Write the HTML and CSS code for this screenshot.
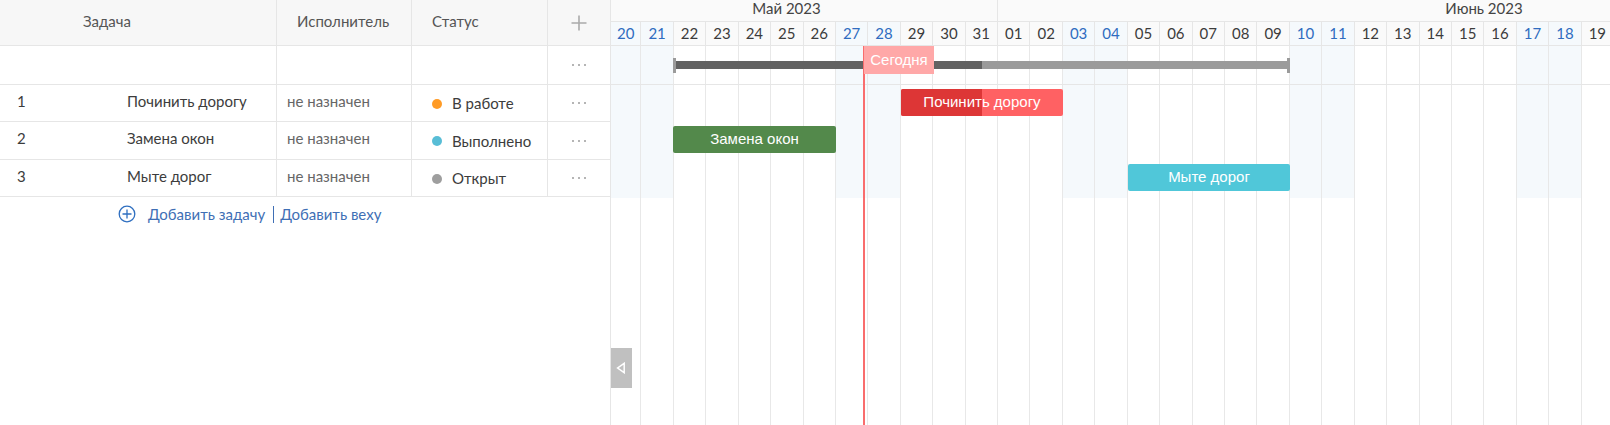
FILE: index.html
```html
<!DOCTYPE html>
<html>
	<head>
		<meta charset="utf-8">
		<title>Диаграмма Ганта</title>
		<link rel="stylesheet" href="styles.css">
	</head>
	<body>
		<div class="gantt">
			<div class="left">
				<div class="tr th">
					<div class="td c-task"><span class="head-task">Задача</span></div>
					<div class="td c-user"><span class="head-user">Исполнитель</span></div>
					<div class="td c-status">Статус</div>
					<div class="td c-act">
						<svg width="18" height="18" viewBox="0 0 18 18"><path d="M9 1.5v15M1.5 9h15" stroke="#aaa" stroke-width="1.6" fill="none"/></svg>
					</div>
				</div>
				<div class="tr project">
					<div class="td c-task"></div>
					<div class="td c-user"></div>
					<div class="td c-status"></div>
					<div class="td c-act"><span class="dots"><i></i><i></i><i></i></span></div>
				</div>
				<div class="tr row1">
					<div class="td c-task"><span class="num">1</span>Починить дорогу</div>
					<div class="td c-user">не назначен</div>
					<div class="td c-status"><span class="dot orange"></span>В работе</div>
					<div class="td c-act"><span class="dots"><i></i><i></i><i></i></span></div>
				</div>
				<div class="tr row2">
					<div class="td c-task"><span class="num">2</span>Замена окон</div>
					<div class="td c-user">не назначен</div>
					<div class="td c-status"><span class="dot blue"></span>Выполнено</div>
					<div class="td c-act"><span class="dots"><i></i><i></i><i></i></span></div>
				</div>
				<div class="tr row3">
					<div class="td c-task"><span class="num">3</span>Мыте дорог</div>
					<div class="td c-user">не назначен</div>
					<div class="td c-status"><span class="dot grey"></span>Открыт</div>
					<div class="td c-act"><span class="dots"><i></i><i></i><i></i></span></div>
				</div>
				<div class="add">
					<svg width="18" height="18" viewBox="0 0 18 18"><circle cx="9" cy="9" r="7.8" stroke="#2f6fc0" stroke-width="1.3" fill="none"/><path d="M9 4.5v9M4.5 9h9" stroke="#2f6fc0" stroke-width="1.3" fill="none"/></svg>
					<a class="add-task">Добавить задачу</a>
					<span class="sep"></span>
					<a>Добавить веху</a>
				</div>
			</div>
			<div class="right">
				<div class="months">
					<div class="month may">Май 2023</div>
					<div class="month june">Июнь 2023</div>
				</div>
				<div class="days">
					<div class="day first off">20</div>
					<div class="day off">21</div>
					<div class="day">22</div>
					<div class="day">23</div>
					<div class="day">24</div>
					<div class="day">25</div>
					<div class="day">26</div>
					<div class="day off">27</div>
					<div class="day off">28</div>
					<div class="day">29</div>
					<div class="day">30</div>
					<div class="day">31</div>
					<div class="day">01</div>
					<div class="day">02</div>
					<div class="day off">03</div>
					<div class="day off">04</div>
					<div class="day">05</div>
					<div class="day">06</div>
					<div class="day">07</div>
					<div class="day">08</div>
					<div class="day">09</div>
					<div class="day off">10</div>
					<div class="day off">11</div>
					<div class="day">12</div>
					<div class="day">13</div>
					<div class="day">14</div>
					<div class="day">15</div>
					<div class="day">16</div>
					<div class="day off">17</div>
					<div class="day off">18</div>
					<div class="day">19</div>
				</div>
				<div class="chart">
					<div class="cols">
						<div class="col first off"></div>
						<div class="col off"></div>
						<div class="col"></div>
						<div class="col"></div>
						<div class="col"></div>
						<div class="col"></div>
						<div class="col"></div>
						<div class="col off"></div>
						<div class="col off"></div>
						<div class="col"></div>
						<div class="col"></div>
						<div class="col"></div>
						<div class="col"></div>
						<div class="col"></div>
						<div class="col off"></div>
						<div class="col off"></div>
						<div class="col"></div>
						<div class="col"></div>
						<div class="col"></div>
						<div class="col"></div>
						<div class="col"></div>
						<div class="col off"></div>
						<div class="col off"></div>
						<div class="col"></div>
						<div class="col"></div>
						<div class="col"></div>
						<div class="col"></div>
						<div class="col"></div>
						<div class="col off"></div>
						<div class="col off"></div>
						<div class="col"></div>
					</div>
					<div class="project-line"></div>

					<!-- project summary -->
					<div class="summary">
						<div class="summary-done"></div>
						<span class="cap cap-l"></span>
						<span class="cap cap-r"></span>
					</div>

					<!-- tasks -->
					<div class="bar bar-red"><div class="bar-done"></div><span>Починить дорогу</span></div>
					<div class="bar bar-green"><span>Замена окон</span></div>
					<div class="bar bar-teal"><span>Мыте дорог</span></div>

					<div class="today-line"></div>
					<div class="today">Сегодня</div>

					<div class="toggle">
						<svg width="10" height="12" viewBox="0 0 10 12"><path d="M8.2 1.3v9.4L1.6 6z" stroke="#fff" stroke-width="1.5" fill="none"/></svg>
					</div>
				</div>
			</div>
		</div>
	</body>
</html>
```

FILE: styles.css
```css
html, body {
	margin: 0;
	height: 100%;
	overflow: hidden;
	background: #fff;
}
.gantt {
	display: flex;
	height: 425px;
	font-family: Lato, "Open Sans", sans-serif;
	font-size: 15px;
	color: #3c3c3c;
}

/* left table */
.left {
	width: 610px;
	flex: none;
	border-right: 1px solid #e6e6e6;
	box-sizing: content-box;
}
.tr {
	display: flex;
	box-sizing: border-box;
	border-bottom: 1px solid #e6e6e6;
}
.th {
	height: 46px;
	background: #f7f7f7;
	color: #555;
}
.project { height: 39px; }
.row1 { height: 37px; }
.row2 { height: 38px; }
.row3 { height: 37px; }
.td {
	display: flex;
	align-items: center;
	box-sizing: border-box;
	padding-bottom: 4px;
	border-right: 1px solid #e6e6e6;
}
.c-task { width: 277px; padding-left: 17px; }
.c-user { width: 135px; padding-left: 10px; color: #666; }
.c-status { width: 136px; padding-left: 20px; padding-bottom: 0; }
.c-act { width: 62px; justify-content: center; border-right: 0; padding-bottom: 0; }
.th .c-task, .th .c-user, .th .c-status { padding-bottom: 4px; }
.row2 .c-task, .row2 .c-user { padding-bottom: 6px; }
.th .c-user { color: #555; }
.head-task { margin-left: 66px; }
.head-user { margin-left: 10px; }
.num { width: 110px; }
.dot {
	width: 10px;
	height: 10px;
	border-radius: 50%;
	margin-right: 10px;
	margin-top: 1px;
}
.orange { background: #ff9b26; }
.blue { background: #58bdd6; }
.grey { background: #9e9e9e; }
.dots { display: flex; gap: 4px; }
.dots i {
	display: block;
	width: 2px;
	height: 2px;
	background: #b5b5b5;
}
.add {
	display: flex;
	align-items: center;
	padding: 8px 0 0 118px;
	color: #3f6fb5;
}
.add-task { margin-left: 12px; }
.sep {
	width: 1px;
	height: 17px;
	margin: 1px 6px 0 8px;
	background: #3f6fb5;
}

/* right part */
.right {
	flex: 1;
	min-width: 0;
	overflow: hidden;
	display: flex;
	flex-direction: column;
}
.months {
	display: flex;
	height: 22px;
	background: #fafafa;
	border-bottom: 1px solid #e6e6e6;
	box-sizing: border-box;
	color: #444;
}
.month { text-align: center; font-size: 15px; line-height: 16px; box-sizing: border-box; }
.may { width: 387px; padding-right: 35px; border-right: 1px solid #e6e6e6; }
.june { flex: 1; padding-left: 360px; }
.days {
	display: flex;
	height: 24px;
	box-sizing: border-box;
	background: #fafafa;
	border-bottom: 1px solid #e6e6e6;
}
.day {
	width: 32.43px;
	flex: none;
	box-sizing: border-box;
	border-right: 1px solid #e6e6e6;
	text-align: center;
	font-size: 15px;
	line-height: 22px;
}
.day.off { color: #2f6cc0; background: #f5f9fc; }
.first { width: 30.4px !important; }

.chart {
	position: relative;
	flex: 1;
	overflow: hidden;
}
.cols {
	display: flex;
	height: 100%;
}
.col {
	width: 32.43px;
	flex: none;
	box-sizing: border-box;
	border-right: 1px solid #e8e8e8;
}
.col.off {
	background: linear-gradient(#f5f9fc, #f5f9fc) no-repeat;
	background-size: 100% 152px;
}
.project-line {
	position: absolute;
	left: 0;
	right: 0;
	top: 38px;
	height: 1px;
	background: #e6e6e6;
}

.summary {
	position: absolute;
	left: 62px;
	top: 15px;
	width: 617px;
	height: 8px;
	background: #9b9b9b;
}
.summary-done {
	width: 309px;
	height: 100%;
	background: #626262;
}
.cap {
	position: absolute;
	top: -3px;
	width: 3px;
	height: 15px;
	background: #9b9b9b;
}
.cap-l { left: 0; }
.cap-r { right: 0; }

.bar {
	position: absolute;
	height: 27px;
	border-radius: 2px;
	overflow: hidden;
	color: #fff;
	font-family: "Liberation Sans", Arial, sans-serif;
	font-size: 15px;
	line-height: 26px;
	text-align: center;
}
.bar span { position: relative; }
.bar-red { left: 290px; top: 43px; width: 162px; background: #ff6163; }
.bar-done {
	position: absolute;
	left: 0;
	top: 0;
	bottom: 0;
	width: 81px;
	background: #dd3636;
}
.bar-green { left: 62px; top: 80px; width: 163px; background: #53894b; }
.bar-teal { left: 517px; top: 118px; width: 162px; background: #50c7d9; }

.today-line {
	position: absolute;
	left: 252px;
	top: 0;
	bottom: 0;
	width: 2px;
	background: #f96d6d;
}
.today {
	position: absolute;
	left: 253px;
	top: 0;
	width: 70px;
	height: 28px;
	background: #ffa8a8;
	color: #fff;
	font-family: "Liberation Sans", Arial, sans-serif;
	font-size: 15px;
	line-height: 28px;
	text-align: center;
}
.toggle {
	position: absolute;
	left: -1px;
	top: 302px;
	width: 22px;
	height: 40px;
	background: #c0c0c0;
	display: flex;
	align-items: center;
	justify-content: center;
}
```
